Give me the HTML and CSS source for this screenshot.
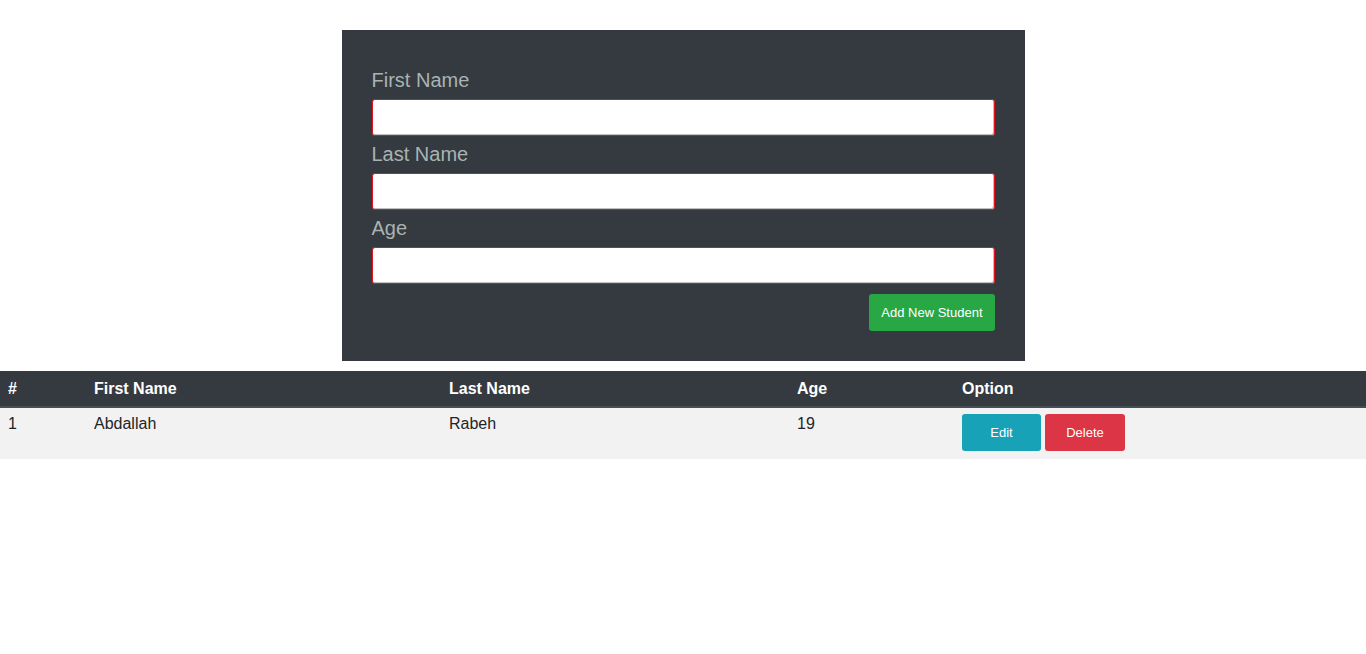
FILE: index.html
```html
<!DOCTYPE html>
<html lang="en">
<head>
<meta charset="utf-8">
<title>Students</title>
<link rel="stylesheet" href="styles.css">
</head>
<body>
<div class="page">
  <form class="card">
    <label class="label" for="fn">First Name</label>
    <input class="field" id="fn" type="text">
    <label class="label" for="ln">Last Name</label>
    <input class="field" id="ln" type="text">
    <label class="label" for="age">Age</label>
    <input class="field" id="age" type="text">
    <div class="actions">
      <button type="button" class="btn btn-green">Add New Student</button>
    </div>
  </form>
  <table class="table">
    <thead>
      <tr>
        <th class="c1">#</th>
        <th class="c2">First Name</th>
        <th class="c3">Last Name</th>
        <th class="c4">Age</th>
        <th class="c5">Option</th>
      </tr>
    </thead>
    <tbody>
      <tr>
        <td>1</td>
        <td>Abdallah</td>
        <td>Rabeh</td>
        <td>19</td>
        <td>
          <div class="ops">
            <button type="button" class="btn btn-info btn-edit">Edit</button>
            <button type="button" class="btn btn-red btn-del">Delete</button>
          </div>
        </td>
      </tr>
    </tbody>
  </table>
</div>
</body>
</html>
```

FILE: styles.css
```css
* { box-sizing: border-box; }
html, body { margin: 0; padding: 0; background: #fff; }
body { font-family: "Liberation Sans", Arial, sans-serif; color: #212529; }

.page {
  padding-top: 30px;
  display: flex;
  flex-direction: column;
  align-items: center;
}

.card {
  width: 683px;
  background: #343a40;
  padding: 37px 30px 30px;
  display: flex;
  flex-direction: column;
  margin: 0;
}

.label {
  font-size: 20px;
  line-height: 26px;
  color: #a9b3b2;
  margin-bottom: 6px;
}

.field {
  display: block;
  width: 100%;
  height: 37px;
  margin: 0 0 5px;
  border: 1px solid #e3131c;
  border-radius: 3px;
  background: #fff;
  box-shadow: inset -1px -1px 0 #bfbfbf;
  font-size: 16px;
  padding: 0 10px;
}

.actions {
  display: flex;
  justify-content: flex-end;
  margin-top: 5px;
}

.btn {
  font-family: "Liberation Sans", Arial, sans-serif;
  font-size: 13px;
  line-height: 15px;
  height: 37px;
  color: #fff;
  border: none;
  border-radius: 3px;
  padding: 0 12px;
  cursor: pointer;
}
.btn-green { background: #28a745; }
.btn-info { background: #17a2b8; }
.btn-red { background: #dc3545; }
.btn-edit { width: 79px; }
.btn-del { width: 80px; }

.table {
  margin-top: 10px;
  width: 100%;
  border-collapse: collapse;
  font-size: 16px;
  line-height: 19px;
}
.table th {
  background: #343a40;
  color: #fff;
  font-weight: bold;
  text-align: left;
  padding: 8px 8px;
  border-bottom: 2px solid #454d55;
}
.table td {
  background: #f2f2f2;
  color: #212529;
  vertical-align: top;
  padding: 6px 8px 8px;
}
.c1 { width: 86px; }
.c2 { width: 355px; }
.c3 { width: 348px; }
.c4 { width: 165px; }

.ops {
  display: flex;
  gap: 4px;
}
```
